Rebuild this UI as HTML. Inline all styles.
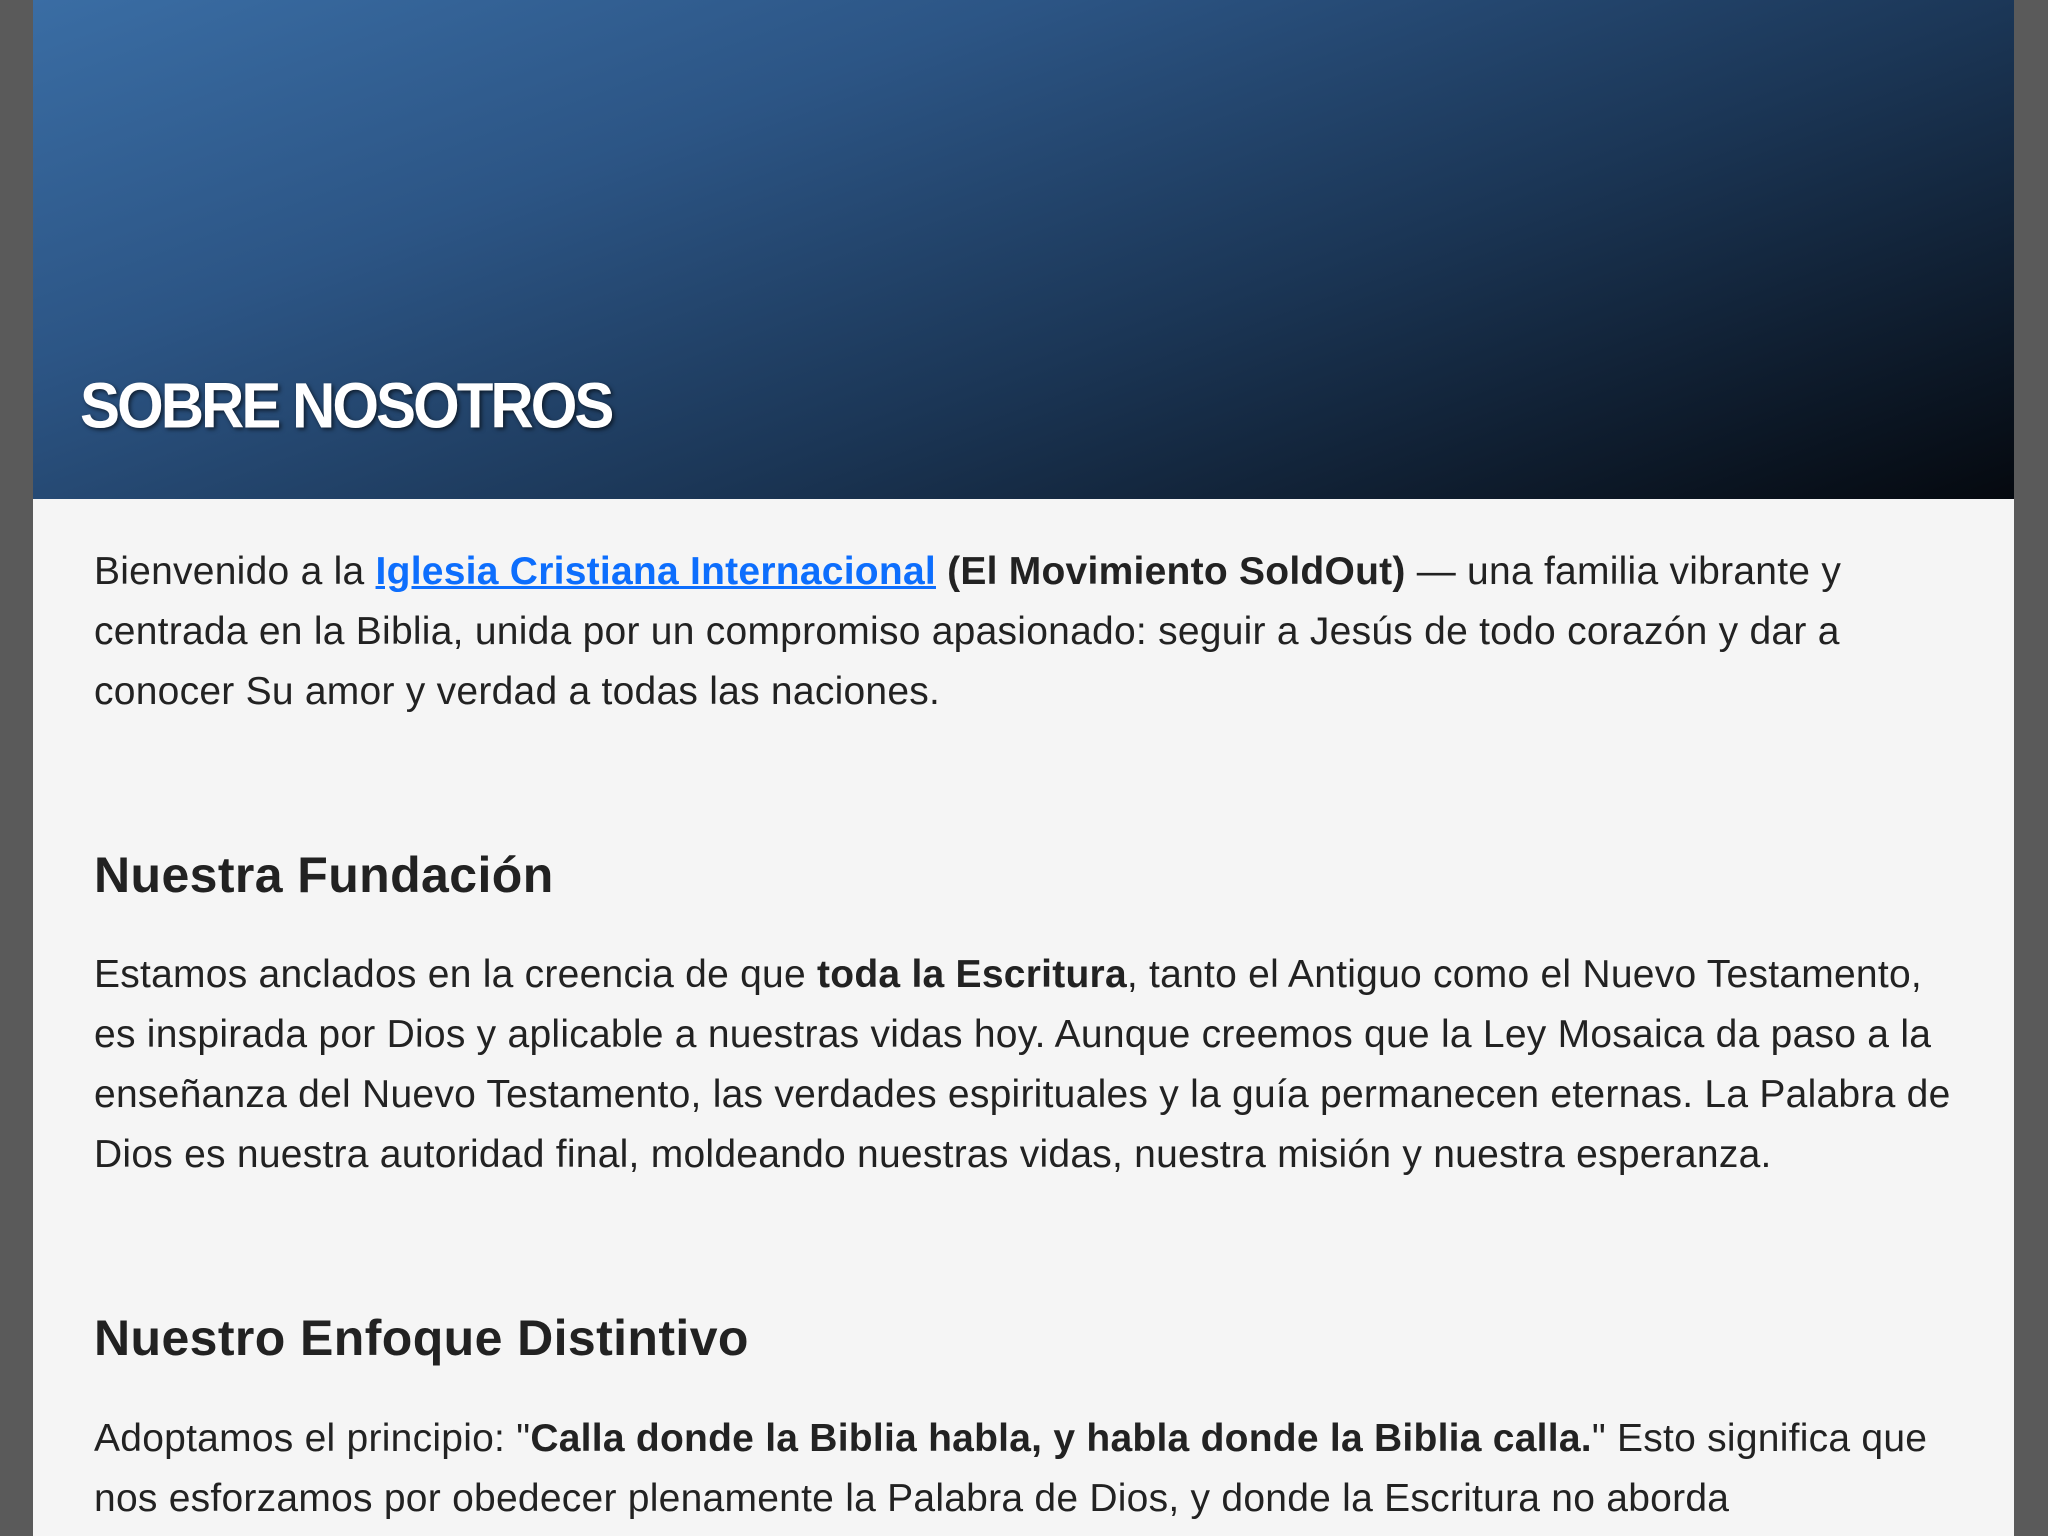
<!DOCTYPE html>
<html><head><meta charset="utf-8"><style>
*{margin:0;padding:0;box-sizing:border-box}
html,body{width:2048px;height:1536px;overflow:hidden;background:#5a5a5a}
.page{position:absolute;left:33px;top:0;width:1981px;height:1536px;background:#f5f5f5}
.hdr{position:absolute;left:0;top:0;width:1981px;height:499px;background:linear-gradient(160deg,#3a6da4 0%,#2c5585 30%,#1b3656 60%,#05090f 100%)}
.hdr h1{position:absolute;left:47px;top:378px;font:bold 60px/1 "Liberation Sans",sans-serif;color:#fff;text-shadow:2px 2px 4px rgba(0,0,0,.6);letter-spacing:-3px;transform:scaleY(1.06);transform-origin:left bottom}
.t{position:absolute;left:61px;font:39px/60px "Liberation Sans",sans-serif;color:#222;white-space:nowrap;letter-spacing:0.25px}
.t b{font-weight:bold;color:#222}
a{color:#0d6efd;font-weight:bold;text-decoration:underline}
h2{position:absolute;left:61px;font:bold 50px/1 "Liberation Sans",sans-serif;color:#222;white-space:nowrap;letter-spacing:0.4px}
</style></head><body><div class="page">
<div class="hdr"><h1>SOBRE NOSOTROS</h1></div>
<div class="t" style="top:542px">Bienvenido a la <a>Iglesia Cristiana Internacional</a> <b>(El Movimiento SoldOut)</b> — una familia vibrante y<br>centrada en la Biblia, unida por un compromiso apasionado: seguir a Jesús de todo corazón y dar a<br>conocer Su amor y verdad a todas las naciones.</div>
<h2 style="top:850px">Nuestra Fundación</h2>
<div class="t" style="top:945px">Estamos anclados en la creencia de que <b>toda la Escritura</b>, tanto el Antiguo como el Nuevo Testamento,<br>es inspirada por Dios y aplicable a nuestras vidas hoy. Aunque creemos que la Ley Mosaica da paso a la<br>enseñanza del Nuevo Testamento, las verdades espirituales y la guía permanecen eternas. La Palabra de<br>Dios es nuestra autoridad final, moldeando nuestras vidas, nuestra misión y nuestra esperanza.</div>
<h2 style="top:1313px">Nuestro Enfoque Distintivo</h2>
<div class="t" style="top:1409px">Adoptamos el principio: "<b>Calla donde la Biblia habla, y habla donde la Biblia calla.</b>" Esto significa que<br>nos esforzamos por obedecer plenamente la Palabra de Dios, y donde la Escritura no aborda</div>
</div></body></html>
